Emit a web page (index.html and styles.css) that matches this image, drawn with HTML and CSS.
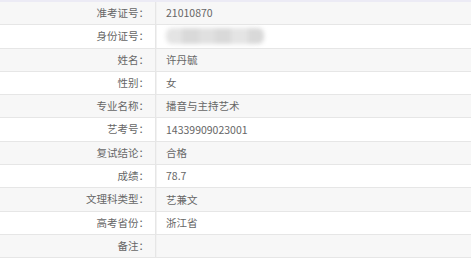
FILE: index.html
```html
<!DOCTYPE html>
<html lang="zh">
<head>
<meta charset="utf-8">
<link rel="stylesheet" href="styles.css">
</head>
<body>
<div class="info">
  <div class="row odd"><div class="lbl">准考证号：</div><div class="val">21010870</div></div>
  <div class="row"><div class="lbl">身份证号：</div><div class="val"><div class="blur"><span></span><span></span><span></span><span></span><span></span><span></span></div></div></div>
  <div class="row odd"><div class="lbl">姓名：</div><div class="val">许丹毓</div></div>
  <div class="row"><div class="lbl">性别：</div><div class="val">女</div></div>
  <div class="row odd"><div class="lbl">专业名称：</div><div class="val">播音与主持艺术</div></div>
  <div class="row"><div class="lbl">艺考号：</div><div class="val">14339909023001</div></div>
  <div class="row odd"><div class="lbl">复试结论：</div><div class="val">合格</div></div>
  <div class="row"><div class="lbl">成绩：</div><div class="val">78.7</div></div>
  <div class="row odd"><div class="lbl">文理科类型：</div><div class="val">艺兼文</div></div>
  <div class="row"><div class="lbl">高考省份：</div><div class="val">浙江省</div></div>
  <div class="row odd"><div class="lbl">备注：</div><div class="val"></div></div>
</div>
</body>
</html>
```
FILE: styles.css
```css
html, body {
  margin: 0;
  padding: 0;
  background: #ffffff;
}
body {
  font-family: "Noto Sans CJK SC", "Liberation Sans", sans-serif;
  font-size: 10.5px;
  color: #666666;
}
.info {
  width: 471px;
  border-top: 2px solid #ecebf5;
}
.row {
  display: grid;
  grid-template-columns: 156px 1fr;
  height: 22.3px;
  border-bottom: 1px solid #e6e6e6;
  background: #ffffff;
}
.row.odd {
  background: #f7f7f7;
}
.lbl {
  text-align: right;
  padding-right: 6px;
  line-height: 22px;
  border-right: 1px solid #e6e6e6;
  box-shadow: 1px 0 0 #f2f2f2;
}
.val {
  padding-left: 10px;
  line-height: 22px;
  display: flex;
  align-items: center;
}
.blur {
  display: flex;
  width: 98px;
  height: 16px;
  filter: blur(2px);
  border-radius: 6px;
  overflow: hidden;
}
.blur span {
  flex: 1;
  background: #e4e4e4;
}
.blur span:nth-child(2n) {
  background: #d9d9d9;
}
.blur span:nth-child(3) {
  background: #e0e0e0;
}
```
